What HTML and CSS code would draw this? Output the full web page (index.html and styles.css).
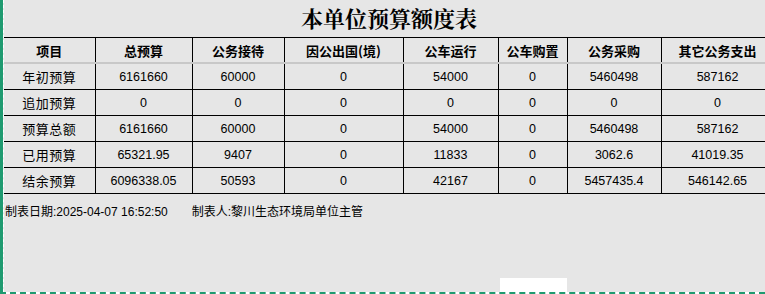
FILE: index.html
```html
<!DOCTYPE html>
<html lang="zh-CN">
<head>
<meta charset="utf-8">
<title>本单位预算额度表</title>
<link rel="stylesheet" href="styles.css">
</head>
<body>
<div class="frame">
  <div class="inner">
    <div class="sheet">
      <h1 class="title">本单位预算额度表</h1>
      <table class="budget">
        <colgroup>
          <col class="c1"><col class="c2"><col class="c3"><col class="c4">
          <col class="c5"><col class="c6"><col class="c7"><col class="c8">
        </colgroup>
        <thead>
          <tr>
            <th>项目</th><th>总预算</th><th>公务接待</th><th>因公出国(境)</th>
            <th>公车运行</th><th>公车购置</th><th>公务采购</th><th>其它公务支出</th>
          </tr>
        </thead>
        <tbody>
          <tr><td class="label">年初预算</td><td>6161660</td><td>60000</td><td>0</td><td>54000</td><td>0</td><td>5460498</td><td>587162</td></tr>
          <tr><td class="label">追加预算</td><td>0</td><td>0</td><td>0</td><td>0</td><td>0</td><td>0</td><td>0</td></tr>
          <tr><td class="label">预算总额</td><td>6161660</td><td>60000</td><td>0</td><td>54000</td><td>0</td><td>5460498</td><td>587162</td></tr>
          <tr><td class="label">已用预算</td><td>65321.95</td><td>9407</td><td>0</td><td>11833</td><td>0</td><td>3062.6</td><td>41019.35</td></tr>
          <tr><td class="label">结余预算</td><td>6096338.05</td><td>50593</td><td>0</td><td>42167</td><td>0</td><td>5457435.4</td><td>546142.65</td></tr>
        </tbody>
      </table>
      <p class="footer"><span>制表日期:2025-04-07 16:52:50</span><span class="maker">制表人:黎川生态环境局单位主管</span></p>
    </div>
    <div class="blank"></div>
  </div>
</div>
</body>
</html>
```

FILE: styles.css
```css
html, body {
  margin: 0;
  padding: 0;
  background: #e6e6e6;
  overflow: hidden;
}
.frame {
  width: 765px;
  height: 294px;
  box-sizing: border-box;
  border-left: 3px solid #1f9a70;
  border-bottom: 2px dashed #1f9a70;
  background: #ffffff;
  overflow: hidden;
}
.inner {
  height: 100%;
  box-sizing: border-box;
  border-left: 1px dashed #ffffff;
  background: #e6e6e6;
  display: flex;
  flex-direction: column;
}
.sheet {
  width: 770px;
  flex: none;
}
.title {
  margin: 0;
  height: 37px;
  line-height: 36px;
  text-align: center;
  font-family: "Noto Serif CJK SC", "Noto Sans CJK SC", serif;
  font-size: 22px;
  font-weight: bold;
  color: #000;
  letter-spacing: 0;
}
.budget {
  border-collapse: collapse;
  table-layout: fixed;
  width: 770px;
  font-family: "Liberation Sans", "Noto Sans CJK SC", sans-serif;
  font-size: 12.5px;
  color: #000;
}
.c1 { width: 91px; }
.c2 { width: 97px; }
.c3 { width: 92px; }
.c4 { width: 119px; }
.c5 { width: 95px; }
.c6 { width: 69px; }
.c7 { width: 94px; }
.c8 { width: 113px; }
.budget th,
.budget td {
  border: 1px solid #000;
  padding: 0;
  height: 25px;
  text-align: center;
  vertical-align: middle;
  white-space: nowrap;
  overflow: hidden;
}
.budget th {
  font-family: "Noto Sans CJK SC", sans-serif;
  font-size: 13px;
  font-weight: bold;
  height: 24px;
  border-bottom: 2px solid #c8c8c8;
}
.budget th:first-child,
.budget td:first-child {
  border-left: none;
}
.budget td.label {
  font-family: "Noto Sans CJK SC", sans-serif;
  font-size: 13px;
  letter-spacing: 0.5px;
}
.footer {
  margin: 10px 0 0 1px;
  font-family: "Liberation Sans", "Noto Sans CJK SC", sans-serif;
  font-size: 12px;
  line-height: 16px;
  color: #000;
  white-space: nowrap;
}
.maker {
  margin-left: 24px;
}
.blank {
  margin-top: auto;
  margin-left: 496px;
  width: 67px;
  height: 14px;
  background: #ffffff;
}
```
